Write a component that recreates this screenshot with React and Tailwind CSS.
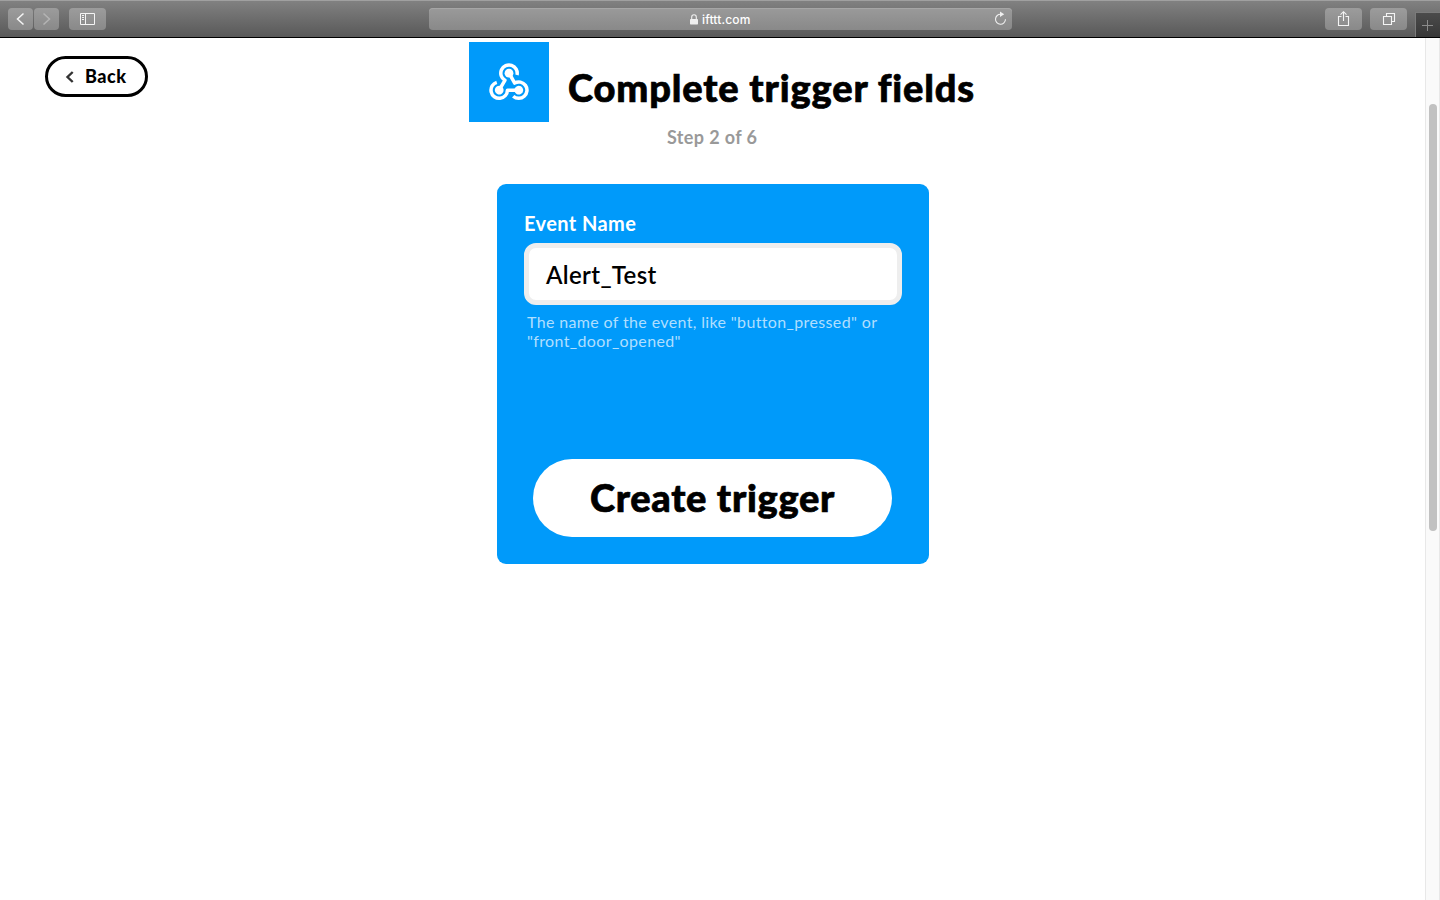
import React from "react";

const toolButton =
  "flex h-[22px] items-center justify-center rounded-[4px] bg-linear-to-b from-[#9c9c9c] to-[#898989] text-[#f4f4f4]";

function Toolbar() {
  return (
    <header className="flex h-[38px] w-full items-start border-b border-black bg-linear-to-b from-[#828282] to-[#595959] pl-2 pt-2 shadow-[inset_0_1px_0_#a0a0a0]">
      <button className={`${toolButton} w-[25px]`}>
        <svg width="25" height="22" viewBox="0 0 25 22" fill="none" stroke="currentColor" strokeWidth="1.5">
          <path d="M15.5 5.5 L9.5 11 L15.5 16.5" />
        </svg>
      </button>
      <button className={`${toolButton} ml-px w-[25px]`}>
        <svg width="25" height="22" viewBox="0 0 25 22" fill="none" stroke="#b4b4b4" strokeWidth="1.5">
          <path d="M9.5 5.5 L15.5 11 L9.5 16.5" />
        </svg>
      </button>
      <button className={`${toolButton} ml-[10px] w-[37px]`}>
        <svg width="37" height="22" viewBox="0 0 37 22" fill="none" stroke="currentColor">
          <path d="M11.5 5.5 H25.5 V16.5 H11.5 Z M16.5 5.5 V16.5" />
          <path d="M13 7.5 H15 M13 9.5 H15 M13 11.5 H15" />
        </svg>
      </button>
      <div className="ml-[323px] flex h-[22px] w-[583px] items-center rounded-[4px] bg-linear-to-b from-[#9a9a9a] to-[#898989] pl-[261px] text-white shadow-[inset_0_1px_0_#a6a6a6]">
        <svg width="8" height="11" viewBox="0 0 8 11" fill="#f0f0f0">
          <rect x="0" y="5" width="8" height="5.5" rx="0.7" />
          <path d="M1.7 5.2 V3 A2.3 2.3 0 0 1 6.3 3 V5.2" fill="none" stroke="#f0f0f0" strokeWidth="1.1" />
        </svg>
        <span className="ml-[4px] w-[60px] pt-px font-['Inter',sans-serif] text-[12px] font-medium leading-[22px] tracking-[0.15px] whitespace-nowrap">
          ifttt.com
        </span>
        <svg className="ml-auto mr-[5px]" width="13" height="16" viewBox="0 0 13 16" fill="none" stroke="#f0f0f0" strokeWidth="1.1">
          <path d="M6.8 3.2 A5 5 0 1 0 11.5 8.3" />
          <path d="M6 0.6 L10.2 3.3 L6 6 Z" fill="#f0f0f0" stroke="none" />
        </svg>
      </div>
      <button className={`${toolButton} ml-[313px] w-[37px]`}>
        <svg width="37" height="22" viewBox="0 0 37 22" fill="none" stroke="currentColor" strokeWidth="1.1">
          <path d="M16.5 8.5 H13.5 V17.5 H23.5 V8.5 H20.5" />
          <path d="M18.5 13 V4 M15.5 6.7 L18.5 3.7 L21.5 6.7" />
        </svg>
      </button>
      <button className={`${toolButton} ml-2 w-[37px]`}>
        <svg width="37" height="22" viewBox="0 0 37 22" fill="none" stroke="currentColor" strokeWidth="1.1">
          <path d="M13.5 8.5 H21.5 V16.5 H13.5 Z" />
          <path d="M16.5 8 V5.5 H24.5 V13.5 H22" />
        </svg>
      </button>
      <button className="ml-2 mt-1 flex h-[25px] w-[25px] items-start border-l border-t border-[#7b7b7b] bg-linear-to-b from-[#4b4b4b] to-[#373737] pl-[6px] pt-[7px]">
        <svg width="11" height="11" viewBox="0 0 11 11" stroke="#8b8b8b">
          <path d="M5.5 0 V11 M0 5.5 H11" />
        </svg>
      </button>
    </header>
  );
}

function WebhookArm({ rotation }) {
  return (
    <g transform={`rotate(${rotation} 40 42.5)`}>
      <path
        d="M48 33 A8.2 8.2 0 1 0 35.9 38.3 L30 48.3"
        fill="none"
        stroke="white"
        strokeWidth="3.5"
        strokeLinejoin="round"
      />
      <circle cx="40" cy="31.2" r="4.4" fill="white" />
    </g>
  );
}

function WebhooksLogo() {
  return (
    <svg className="shrink-0 bg-[#009afa]" width="80" height="80" viewBox="0 0 80 80">
      <WebhookArm rotation={0} />
      <WebhookArm rotation={120} />
      <WebhookArm rotation={240} />
    </svg>
  );
}

function TriggerCard() {
  return (
    <section className="ml-[497px] mt-[35px] flex h-[380px] w-[432px] flex-col rounded-[9px] bg-[#009afa] px-[27px] pt-[27px]">
      <label className="h-8 whitespace-nowrap text-[20px] font-bold leading-[25px] tracking-[0.4px] text-white">
        Event Name
      </label>
      <div className="flex h-[62px] shrink-0 items-center rounded-[12px] border-[5px] border-[#eeeeee] bg-white pl-[17px] text-[24px] font-semibold tracking-[0.35px] text-black">
        <span className="whitespace-nowrap pt-[2px]">Alert_Test</span>
      </div>
      <p className="ml-[3px] mt-[7px] whitespace-nowrap text-[16px] leading-[19px] tracking-[0.36px] text-[#b0dfff]">
        The name of the event, like "button_pressed" or
        <br />
        "front_door_opened"
      </p>
      <button className="ml-[9px] mt-[109px] h-[78px] w-[359px] shrink-0 whitespace-nowrap rounded-full bg-white pb-[2px] text-[38px] font-black tracking-[0.7px] text-black [-webkit-text-stroke:0.7px_black]">
        Create trigger
      </button>
    </section>
  );
}

export default function App() {
  return (
    <div className="flex h-[900px] w-[1440px] flex-col overflow-hidden bg-white font-['Lato',sans-serif]">
      <Toolbar />
      <div className="flex min-h-0 flex-1">
        <main className="w-[1425px]">
          <div className="flex h-[84px]">
            <button className="ml-[45px] mt-[18px] flex h-[41px] w-[103px] items-center rounded-full border-3 border-black pl-[17px] text-[18px] font-black tracking-[0.5px] text-black">
              <svg width="9" height="12" viewBox="0 0 9 12" fill="none" stroke="#333333" strokeWidth="2.4">
                <path d="M7.7 1 L2.5 6 L7.7 11" />
              </svg>
              <span className="ml-[11px] whitespace-nowrap">Back</span>
            </button>
            <div className="ml-[321px] mt-1 flex">
              <WebhooksLogo />
              <h1 className="ml-[19px] mt-[21px] whitespace-nowrap text-[38px] font-black leading-[48px] tracking-[0.85px] text-black [-webkit-text-stroke:0.7px_black]">
                Complete trigger fields
              </h1>
            </div>
          </div>
          <p className="ml-[667px] mt-[3px] h-6 whitespace-nowrap text-[18px] font-bold leading-[24px] tracking-[0.37px] text-[#999999]">
            Step 2 of 6
          </p>
          <TriggerCard />
        </main>
        <aside className="w-[15px] border-x border-[#e8e8e8] bg-[#fafafa] pl-[3px] pt-[66px]">
          <div className="h-[427px] w-2 rounded-full bg-[#c1c1c1]" />
        </aside>
      </div>
    </div>
  );
}
